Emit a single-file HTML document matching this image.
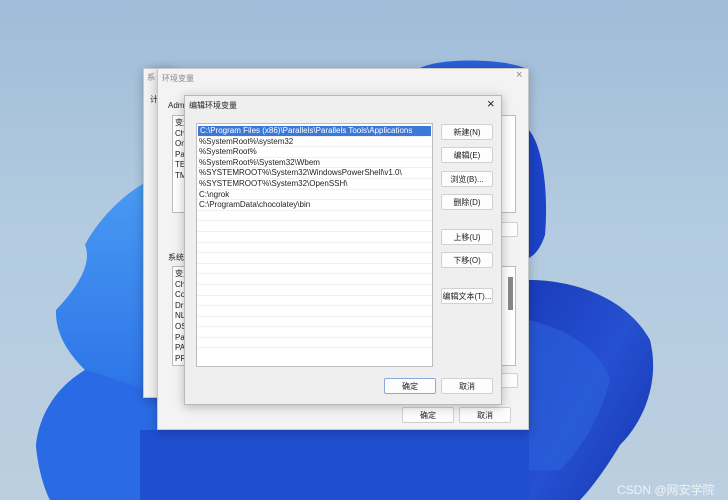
<!DOCTYPE html>
<html><head><meta charset="utf-8"><style>
*{margin:0;padding:0;box-sizing:border-box}
body{width:728px;height:500px;overflow:hidden;position:relative;font-family:"Liberation Sans","Noto Sans CJK SC",sans-serif;font-size:8px;color:#222;background:linear-gradient(180deg,#9fbcd8 0%,#b3cbe0 45%,#bccfe0 100%)}
.abs{position:absolute}
.dlg{position:absolute;background:#f0f0f0;border:1px solid #c8c8c8;box-shadow:0 2px 10px rgba(0,0,0,.25);overflow:hidden}
.box{position:absolute;background:#fff;border:1px solid #bcbcbc;overflow:hidden}
.btn{position:absolute;background:#fdfdfd;border:1px solid #d0d0d0;border-radius:2px;text-align:center;font-size:8px;line-height:15px;color:#222}
.t{position:absolute;white-space:nowrap;font-size:8px}
.row{height:10.6px;line-height:10.6px;padding-left:2px;border-bottom:1px solid #f1f1f1;white-space:nowrap;font-size:8px}
</style></head><body>
<svg class="abs" style="left:0;top:0" width="728" height="500">
<defs>
<linearGradient id="lb" x1="0" y1="0" x2="0" y2="1"><stop offset="0" stop-color="#4a9af2"/><stop offset=".6" stop-color="#2f78ea"/><stop offset="1" stop-color="#1d4fd0"/></linearGradient>
<linearGradient id="rb" x1="0" y1="0" x2="1" y2="1"><stop offset="0" stop-color="#1a3cbc"/><stop offset=".5" stop-color="#2550d0"/><stop offset="1" stop-color="#1535b0"/></linearGradient>
</defs>
<path d="M150 180 C120 195 95 225 85 245 C92 262 80 285 56 310 C55 335 70 355 85 370 C60 385 40 410 36 445 C38 470 45 490 50 500 L160 500 L160 180Z" fill="url(#lb)"/>
<path d="M85 370 C60 385 40 410 36 445 C38 470 45 490 50 500 L160 500 L160 395 C130 385 105 375 85 370Z" fill="#2a6ae4"/>
<path d="M140 430 L540 430 L540 500 L140 500Z" fill="#1f4ed0"/>
<path d="M529 130 C545 150 548 200 545 235 C540 250 534 255 529 258Z" fill="#1c42c8"/>
<path d="M529 280 C570 280 625 295 650 340 C660 380 645 420 620 445 C605 470 590 490 580 500 L529 500Z" fill="url(#rb)"/>
<path d="M529 320 C570 330 600 350 610 380 C600 420 580 450 560 470 L529 470Z" fill="#2d62dc" opacity=".6"/>
<path d="M420 68 C440 58 500 58 525 68Z" fill="#2a5fdc"/>
</svg>
<!-- back dialog -->
<div class="dlg" style="left:143px;top:68px;width:30px;height:330px;background:#f3f3f3"></div>
<div class="t" style="left:147px;top:72px;color:#888">系</div>
<div class="t" style="left:150px;top:94px">计</div>
<!-- env var dialog -->
<div class="dlg" style="left:157px;top:68px;width:372px;height:362px;background:#f3f3f3">
<div class="t" style="left:4px;top:4px;color:#888">环境变量</div>
<div class="t" style="left:358px;top:0px;font-size:11px;color:#888">×</div>
<div class="t" style="left:10px;top:32px">Adm</div>
<div class="box" style="left:14px;top:46px;width:344px;height:98px"></div>
<div class="t" style="left:17px;top:49px;line-height:10.6px">变量<br>Ch<br>On<br>Pat<br>TEI<br>TM</div>
<div class="btn" style="left:340px;top:153px;width:20px;height:15px"></div>
<div class="t" style="left:10px;top:183px">系统</div>
<div class="box" style="left:14px;top:197px;width:344px;height:100px"></div>
<div class="t" style="left:17px;top:200px;line-height:10.6px">变量<br>Ch<br>Co<br>Dri<br>NL<br>OS<br>Pat<br>PA<br>PR</div>
<div class="abs" style="left:350px;top:208px;width:5px;height:33px;background:#888"></div>
<div class="btn" style="left:340px;top:304px;width:20px;height:15px"></div>
<div class="btn" style="left:244px;top:338px;width:52px;height:16px">确定</div>
<div class="btn" style="left:301px;top:338px;width:52px;height:16px">取消</div>
</div>
<!-- edit dialog -->
<div class="dlg" style="left:184px;top:95px;width:318px;height:310px;background:#efefef;border-color:#b9b9b9">
<div class="t" style="left:4px;top:4px">编辑环境变量</div>
<div class="t" style="left:302px;top:0px;font-size:13px">×</div>
<div class="box" style="left:11px;top:27px;width:237px;height:244px;padding-top:2px">
<div class="row" style="background:#3c78d8;color:#fff;margin:0 1px">C:\Program Files (x86)\Parallels\Parallels Tools\Applications</div>
<div class="row">%SystemRoot%\system32</div>
<div class="row">%SystemRoot%</div>
<div class="row">%SystemRoot%\System32\Wbem</div>
<div class="row">%SYSTEMROOT%\System32\WindowsPowerShell\v1.0\</div>
<div class="row">%SYSTEMROOT%\System32\OpenSSH\</div>
<div class="row">C:\ngrok</div>
<div class="row">C:\ProgramData\chocolatey\bin</div>
<div class="row"></div><div class="row"></div><div class="row"></div><div class="row"></div><div class="row"></div><div class="row"></div><div class="row"></div><div class="row"></div><div class="row"></div><div class="row"></div><div class="row"></div><div class="row"></div><div class="row"></div>
</div>
<div class="btn" style="left:256px;top:28px;width:52px;height:16px">新建(N)</div>
<div class="btn" style="left:256px;top:51px;width:52px;height:16px">编辑(E)</div>
<div class="btn" style="left:256px;top:75px;width:52px;height:16px">浏览(B)...</div>
<div class="btn" style="left:256px;top:98px;width:52px;height:16px">删除(D)</div>
<div class="btn" style="left:256px;top:133px;width:52px;height:16px">上移(U)</div>
<div class="btn" style="left:256px;top:156px;width:52px;height:16px">下移(O)</div>
<div class="btn" style="left:256px;top:192px;width:52px;height:16px">编辑文本(T)...</div>
<div class="btn" style="left:199px;top:282px;width:52px;height:16px;border-color:#8aa9d8">确定</div>
<div class="btn" style="left:256px;top:282px;width:52px;height:16px">取消</div>
</div>
<div class="t" style="left:617px;top:481px;font-size:12px;color:rgba(255,255,255,.75)">CSDN @网安学院</div>
</body></html>
